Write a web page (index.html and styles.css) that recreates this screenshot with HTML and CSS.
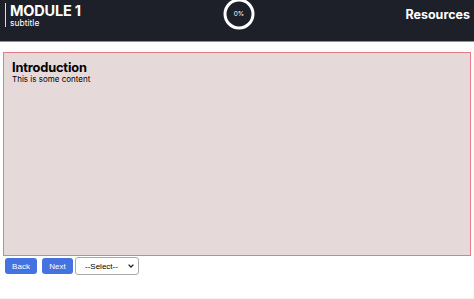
FILE: index.html
```html
<!DOCTYPE html>
<html>
<head>
<meta charset="utf-8">
<link rel="stylesheet" href="styles.css">
</head>
<body>
<header class="topbar">
  <div class="title-block">
    <div class="module">MODULE 1</div>
    <div class="subtitle">subtitle</div>
  </div>
  <div class="progress">
    <svg width="32" height="32" viewBox="0 0 32 32"><circle cx="16" cy="16" r="14" fill="none" stroke="#fff" stroke-width="3"/></svg>
    <span class="pct">0%</span>
  </div>
  <div class="resources">Resources</div>
</header>
<main class="content">
  <h2 class="heading">Introduction</h2>
  <p class="text">This is some content</p>
</main>
<nav class="controls">
  <button class="btn">Back</button>
  <button class="btn">Next</button>
  <span class="sel-wrap">
    <select class="sel"><option>--Select--</option></select>
    <svg class="chev" width="6" height="4" viewBox="0 0 6 4"><path d="M0.6 0.6 L3 3 L5.4 0.6" fill="none" stroke="#222" stroke-width="1.3"/></svg>
  </span>
</nav>
<div class="footer-line"></div>
</body>
</html>
```
FILE: styles.css
```css
html, body { margin: 0; padding: 0; background: #fff; }
body { font-family: Inter, "Noto Sans", sans-serif; width: 474px; height: 299px; overflow: hidden; }
.topbar {
  height: 41px;
  background: #1e2029;
  border-bottom: 1px solid #d9707f;
  display: grid;
  grid-template-columns: 1fr auto 1fr;
  align-items: start;
}
.title-block {
  justify-self: start;
  margin: 3px 0 0 5px;
  padding-left: 4px;
  border-left: 1px solid #ddd;
  color: #fff;
  height: 24px;
}
.module { font-size: 14.5px; font-weight: 700; line-height: 15px; letter-spacing: -0.2px; }
.subtitle { font-size: 8.5px; line-height: 10px; }
.progress {
  position: relative;
  width: 32px; height: 32px;
  margin-top: -2px;
  margin-left: 4px;
}
.progress svg { display: block; }
.pct {
  position: absolute; left: 0; top: 0; width: 32px; height: 32px;
  display: flex; align-items: center; justify-content: center;
  color: #fff; font-size: 6.5px;
}
.resources {
  justify-self: end;
  color: #fff; font-weight: 700; font-size: 12.5px;
  margin: 7px 4px 0 0;
}
.content {
  margin: 10px 3px 0 3px;
  background: #e5d9d9;
  border: 1px solid #e87a87;
  padding: 7px 8px;
  box-sizing: border-box;
  height: 204px;
}
.heading { margin: 0; font-size: 12.8px; line-height: 15px; font-weight: 700; color: #000; letter-spacing: -0.15px; }
.text { margin: 0; font-size: 8px; line-height: 9px; color: #000; }
.controls {
  display: flex; align-items: center; gap: 5px;
  margin: 0 0 0 5px;
  height: 20px;
}
.btn {
  background: #4472e0; color: #fff; border: none; border-radius: 3px;
  font-family: "Liberation Sans", Arial, sans-serif; font-size: 8px;
  width: 32px; height: 16px; padding: 0;
}
.btn + .btn { width: 31px; }
.sel-wrap { position: relative; display: block; margin-left: -3px; height: 18px; }
.sel {
  appearance: none; -webkit-appearance: none;
  display: block;
  width: 64px; height: 18px; font-size: 8px; color: #000;
  padding: 0 0 0 9px;
  font-family: "Liberation Sans", Arial, sans-serif;
  border: 1px solid #aaa; border-radius: 3px; background: #fff;
}
.chev { position: absolute; right: 5px; top: 7px; }
.footer-line { margin-top: 22px; height: 2px; background: #fdeef1; }
```
